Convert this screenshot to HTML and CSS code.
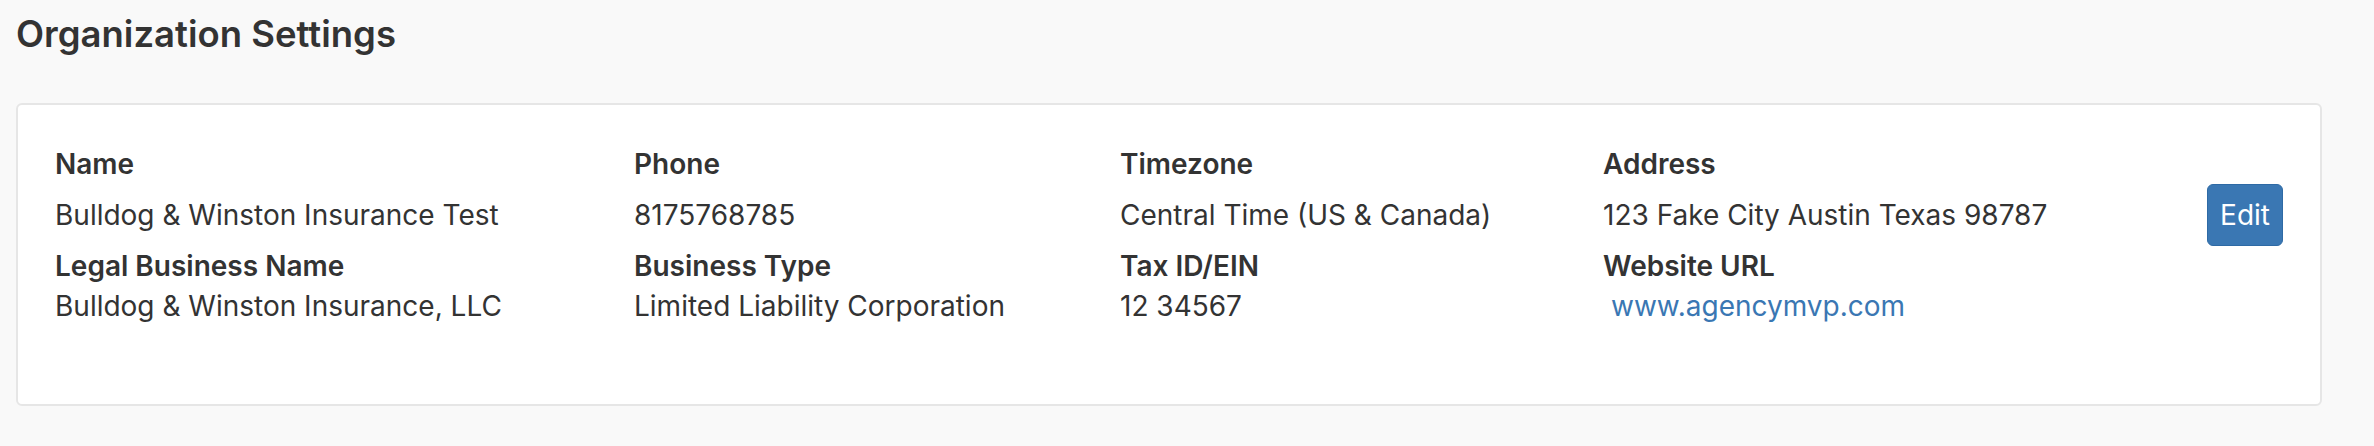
FILE: index.html
```html
<!DOCTYPE html>
<html lang="en">
<head>
<meta charset="utf-8">
<title>Organization Settings</title>
<link rel="stylesheet" href="styles.css">
</head>
<body>
<div class="page">
  <h1 class="title">Organization Settings</h1>
  <div class="card">
    <div class="grid">
      <div class="label">Name</div>
      <div class="label">Phone</div>
      <div class="label">Timezone</div>
      <div class="label">Address</div>
      <div class="spacer"></div>

      <div class="value">Bulldog &amp; Winston Insurance Test</div>
      <div class="value">8175768785</div>
      <div class="value">Central Time (US &amp; Canada)</div>
      <div class="value">123 Fake City Austin Texas 98787</div>
      <div class="actions"><button class="btn" type="button">Edit</button></div>

      <div class="label">Legal Business Name</div>
      <div class="label">Business Type</div>
      <div class="label">Tax ID/EIN</div>
      <div class="label">Website URL</div>
      <div class="spacer"></div>

      <div class="value">Bulldog &amp; Winston Insurance, LLC</div>
      <div class="value">Limited Liability Corporation</div>
      <div class="value">12 34567</div>
      <div class="value"><a class="link" href="#">www.agencymvp.com</a></div>
      <div class="spacer"></div>
    </div>
  </div>
</div>
</body>
</html>
```
FILE: styles.css
```css
* {
  box-sizing: border-box;
}

html, body {
  margin: 0;
  padding: 0;
  background: #f9f9f9;
}

body {
  font-family: Inter, "Noto Sans", "Liberation Sans", sans-serif;
  color: #333333;
  font-size: 28px;
}

.page {
  padding: 12px 52px 0 16px;
}

.title {
  margin: 0 0 47px;
  font-size: 36.5px;
  line-height: 44px;
  font-weight: 600;
  color: #333333;
}

.card {
  background: #ffffff;
  border: 2px solid #e6e6e6;
  border-radius: 6px;
  padding: 39px 37px 78px 37px;
}

.grid {
  display: grid;
  grid-template-columns: 579px 486px 483px 1fr auto;
  grid-template-rows: 40px 62px 40px 40px;
  align-items: center;
}

.label {
  font-weight: 600;
  line-height: 40px;
  white-space: nowrap;
}

.value {
  line-height: 40px;
  white-space: nowrap;
}

.link {
  color: #3a77b3;
  text-decoration: none;
  margin-left: 8px;
}

.actions {
  display: flex;
  justify-content: flex-end;
}

.btn {
  font-family: inherit;
  font-size: 28px;
  color: #ffffff;
  background: #3a77b3;
  border: 1px solid #2e6aa5;
  border-radius: 6px;
  height: 62px;
  padding: 0 12px;
  line-height: 1;
}
```
